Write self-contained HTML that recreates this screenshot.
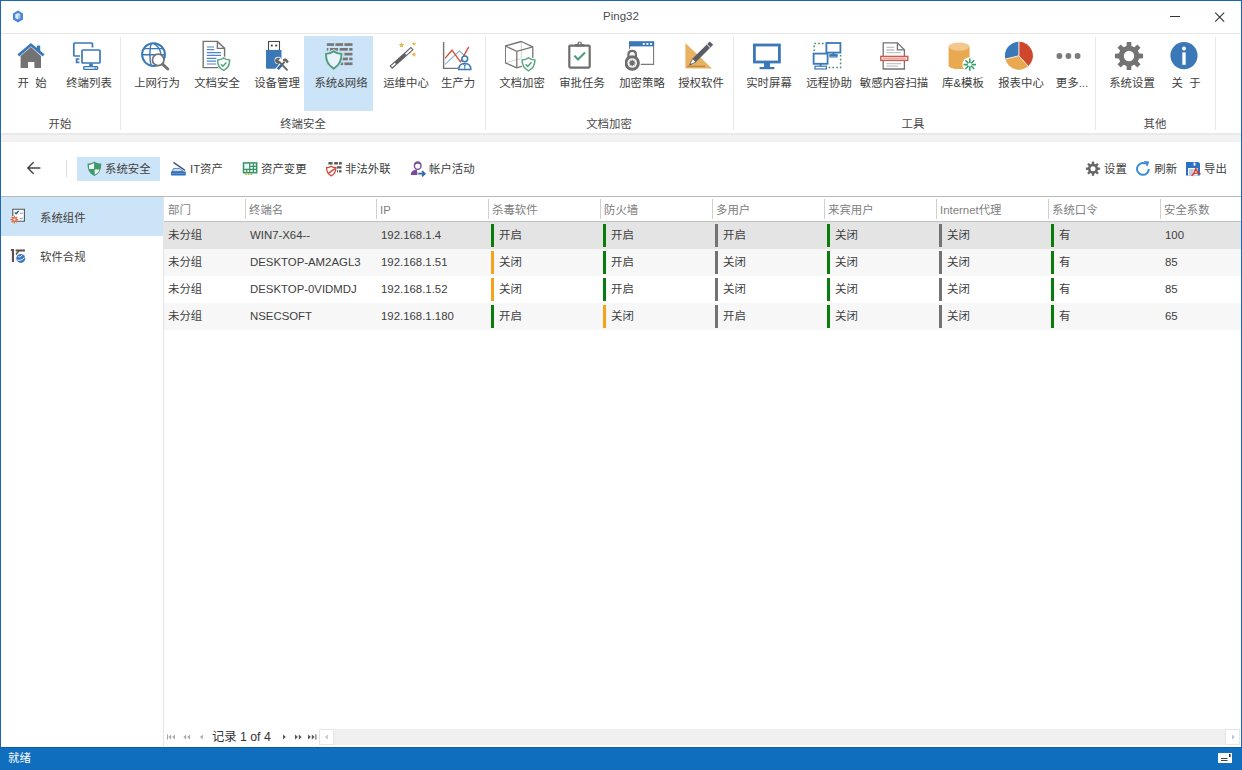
<!DOCTYPE html>
<html lang="zh"><head><meta charset="utf-8"><title>Ping32</title>
<style>
*{box-sizing:border-box;margin:0;padding:0}
html,body{width:1242px;height:770px;overflow:hidden;background:#fff}
body{font-family:"Liberation Sans","Noto Sans CJK SC",sans-serif;font-size:11.4px;color:#404040;position:relative}
.abs{position:absolute}
#win{position:absolute;left:0;top:0;width:1242px;height:770px;background:#fff}
.bd{position:absolute;background:#1c66b4}
#title{position:absolute;left:1px;top:1px;width:1239px;height:33px;border-bottom:1px solid #e6e6e6;background:#fff}
#title .t{position:absolute;left:0;width:1240px;top:7.5px;text-align:center;font-size:11.5px;line-height:15px;color:#4c4c4c}
.rb{position:absolute;top:36px;height:75px;text-align:center;white-space:nowrap}
.rb .lb{position:absolute;left:-19px;right:-21px;top:39.5px;font-size:11.4px;line-height:14px;color:#404040;text-align:center}
.rb>svg{position:absolute;left:50%;margin-left:-16px;top:4px;width:32px;height:32px}
.rsep{position:absolute;top:37px;height:93px;width:1px;background:#e8e8e8}
.gl{position:absolute;top:116.5px;width:100px;margin-left:-50px;text-align:center;font-size:11.4px;line-height:14px;color:#484848}
#band{position:absolute;left:1px;top:133px;width:1240px;height:9px;background:#f2f2f2;border-top:2px solid #e9e9e9}
.tb{position:absolute;top:161px;height:16px;font-size:11.4px;line-height:16px;color:#404040;white-space:nowrap}
.tbi{position:absolute;top:160px;width:16px;height:16px;overflow:visible}
#side{position:absolute;left:1px;top:197px;width:163px;height:549px;background:#fff}
.si{position:absolute;left:0;width:162px;height:39px;font-size:11.4px;line-height:42px;padding-left:39px;color:#404040}
.th{position:absolute;top:203px;font-size:11.4px;line-height:14px;color:#808080;white-space:nowrap}
.hs{position:absolute;top:199px;width:1px;height:20px;background:#d0d0d0}
.row{position:absolute;left:164px;width:1077px;height:27px}
.c{position:absolute;top:6px;font-size:11.4px;line-height:14px;color:#404040;white-space:nowrap}
.bar{position:absolute;top:2px;width:3px;height:23px}
.g{background:#0a7c0a}.o{background:#f5a31a}.k{background:#737373}
#nav{position:absolute;left:164px;top:728px;width:1077px;height:18px;background:#fff}
#status{position:absolute;left:0;top:747px;width:1242px;height:23px;background:#106ebe;border-top:1px solid #0c5ea6;color:#fff;font-size:11.4px;line-height:23px}
</style></head><body>
<div id="win">
<div class="bd" style="left:0;top:0;width:1242px;height:1px"></div><div class="bd" style="left:0;top:0;width:1px;height:770px"></div><div class="bd" style="left:1241px;top:0;width:1px;height:770px"></div>
<div id="title"><div class="t">Ping32</div></div><svg class="abs" style="left:12px;top:10px;width:12px;height:13px" viewBox="0 0 12 13"><path d="M6 0.6 L11 3.4 V9.4 L6 12.4 L1 9.4 V3.4Z" fill="#4a86d8"/><path d="M6 3 L8.6 4.6 L6 6.2 V9.6 L3.2 8 V4.6Z" fill="#dbe9fb"/><path d="M6 6.2 L8.6 4.6 V8 L6 9.6Z" fill="#9cc0f0"/></svg>
<div class="abs" style="left:1170px;top:16px;width:10px;height:1px;background:#333"></div>
<svg class="abs" style="left:1214px;top:11px;width:12px;height:12px" viewBox="0 0 12 12"><path d="M1.2 1.7 L10.2 10.7 M10.2 1.7 L1.2 10.7" stroke="#333" stroke-width="1.1"/></svg>
<div id="ribbon"><div style="position:absolute;left:304px;top:36px;width:69px;height:75px;background:#cce4f7"></div>
<div class="rb" style="left:15px;width:32px"><svg viewBox="0 0 32 32" style="margin-left:-16px"><path d="M5.6 16 L15.9 7 L26 16 V28 H19.4 V22 H13 V28 H5.6Z" fill="#737373"/><path d="M3.4 15.4 L15.9 4.8 L28.6 15.4" fill="none" stroke="#3b78b8" stroke-width="2.7"/><rect x="21.8" y="5.6" width="3.4" height="6" fill="#3b78b8"/></svg><div class="lb">开&nbsp;&nbsp;始</div></div>
<div class="rb" style="left:72px;width:32px"><svg viewBox="0 0 32 32" style="margin-left:-16px"><path d="M8 16 H2.6 Q1.8 16 1.8 15.2 V3.8 Q1.8 3 2.6 3 H19.7 Q20.5 3 20.5 3.8 V7.6" fill="none" stroke="#3b78b8" stroke-width="1.7"/><path d="M7.4 19 H4.6 V22.4 H7.4" fill="none" stroke="#3b78b8" stroke-width="1.7"/><rect x="10" y="10" width="18" height="13" rx="0.8" fill="#fff" stroke="#3b78b8" stroke-width="1.7"/><rect x="17.2" y="23.4" width="3.6" height="3" fill="#3b78b8"/><rect x="11.8" y="26.6" width="13.8" height="2.8" rx="0.6" fill="#fff" stroke="#3b78b8" stroke-width="1.4"/><rect x="22.4" y="27.4" width="1.8" height="1.2" fill="#3b78b8"/></svg><div class="lb">终端列表</div></div>
<div class="rb" style="left:140px;width:32px"><svg viewBox="0 0 32 32" style="margin-left:-16px"><circle cx="13.5" cy="14.6" r="11.4" fill="#fff" stroke="#3b78b8" stroke-width="2"/><path d="M2.4 14.8 H24.6 M4.6 8.6 H22.4 M11.2 3.4 C9.4 9 9.4 20 11.2 25.8 M13.6 3.4 C21 7.6 21.4 15 20.6 17" fill="none" stroke="#3b78b8" stroke-width="1.4"/><circle cx="18.2" cy="19.9" r="5.7" fill="#fff" stroke="#737373" stroke-width="1.7"/><path d="M22.8 24.4 L27.8 29" stroke="#737373" stroke-width="3" stroke-linecap="round"/></svg><div class="lb">上网行为</div></div>
<div class="rb" style="left:200px;width:32px"><svg viewBox="0 0 32 32" style="margin-left:-16px"><path d="M3.2 1.4 H17.4 L24.6 8.4 V27.6 H3.2Z" fill="#fff" stroke="#737373" stroke-width="1.4"/><path d="M17.4 1.4 V8.4 H24.6" fill="none" stroke="#737373" stroke-width="1.4"/><path d="M6.8 7 H14 M6.8 9.6 H14 M6.8 12.6 H21 M6.8 15.4 H21 M6.8 18.4 H16.6 M6.8 21.2 H16 M6.8 24 H16" stroke="#4f86c8" stroke-width="1.2"/><path d="M23.6 18 C25.3 19.4 27.2 19.9 29.6 20 C29.8 25.4 27.6 28.4 23.6 30.4 C19.6 28.4 17.4 25.4 17.6 20 C20 19.9 21.9 19.4 23.6 18Z" fill="#fff" stroke="#fff" stroke-width="3"/><path d="M23.6 18 C25.3 19.4 27.2 19.9 29.6 20 C29.8 25.4 27.6 28.4 23.6 30.4 C19.6 28.4 17.4 25.4 17.6 20 C20 19.9 21.9 19.4 23.6 18Z" fill="#fff" stroke="#58a981" stroke-width="1.5"/><path d="M21 24.2 L22.9 26.2 L26.4 22.4" fill="none" stroke="#5a9a7a" stroke-width="1.5"/></svg><div class="lb">文档安全</div></div>
<div class="rb" style="left:260px;width:32px"><svg viewBox="0 0 32 32" style="margin-left:-16px"><rect x="8.5" y="1.5" width="11" height="9" fill="#fff" stroke="#484848" stroke-width="1.1"/><rect x="10.8" y="4.6" width="1.9" height="1.9" fill="#444"/><rect x="15.3" y="4.6" width="1.9" height="1.9" fill="#444"/><path d="M6 10 H21.5 V27.4 Q21.5 28.8 20 28.8 H7.5 Q6 28.8 6 27.4Z" fill="#3b78b8"/><g stroke="#fff" stroke-width="4.6" stroke-linecap="round"><path d="M18.4 20.8 L27 29.8 M25.6 20.8 L17.6 29.6"/></g><circle cx="18.2" cy="20.4" r="3.6" fill="#fff"/><path d="M24.2 18 L29 22.4 L27 24.6 L22.2 20.2Z" fill="#fff" stroke="#fff" stroke-width="1.6"/><path d="M24.6 21.8 L21.6 25" stroke="#666" stroke-width="1.9"/><path d="M21.8 24.8 L17.8 29.2" stroke="#2f68ad" stroke-width="2.6"/><path d="M23.6 18.8 Q25.6 17.8 27 19.2 L28.8 21.6 L27 23.4 L25.6 21.6 L24 21.4 L22.6 20Z" fill="#666"/><path d="M19.4 21.8 L27 29.8" stroke="#666" stroke-width="1.9" stroke-linecap="round"/><path d="M20.6 19 A3 3 0 1 0 20.4 22.8 L18.6 20.8 L19 19.2Z" fill="#666"/></svg><div class="lb">设备管理</div></div>
<div class="rb" style="left:324px;width:32px"><svg viewBox="0 0 32 32" style="margin-left:-16px"><rect x="2.8" y="3.2" width="7.3" height="2.7" fill="#777"/><rect x="11.4" y="3.2" width="7.7" height="2.7" fill="#777"/><rect x="20.4" y="3.2" width="8.1" height="2.7" fill="#777"/><rect x="2.8" y="8.0" width="1.5" height="2.7" fill="#777"/><rect x="5.9" y="8.0" width="8.1" height="2.7" fill="#777"/><rect x="15.6" y="8.0" width="8.3" height="2.7" fill="#777"/><rect x="25.2" y="8.0" width="3.3" height="2.7" fill="#777"/><rect x="2.8" y="12.8" width="7.3" height="2.7" fill="#777"/><rect x="11.4" y="12.8" width="7.7" height="2.7" fill="#777"/><rect x="20.4" y="12.8" width="8.1" height="2.7" fill="#777"/><rect x="2.8" y="17.6" width="1.5" height="2.7" fill="#777"/><rect x="5.9" y="17.6" width="8.1" height="2.7" fill="#777"/><rect x="15.6" y="17.6" width="8.3" height="2.7" fill="#777"/><rect x="25.2" y="17.6" width="3.3" height="2.7" fill="#777"/><rect x="2.8" y="22.4" width="7.3" height="2.7" fill="#777"/><rect x="11.4" y="22.4" width="7.7" height="2.7" fill="#777"/><rect x="20.4" y="22.4" width="8.1" height="2.7" fill="#777"/><path d="M9.7 11.2 C12 13 14.6 13.8 17.4 13.9 C17.7 21 14.8 25.6 9.7 28.6 C4.6 25.6 1.7 21 2 13.9 C4.8 13.8 7.4 13 9.7 11.2Z" fill="#cce4f7" stroke="#cce4f7" stroke-width="3.6"/><path d="M9.7 11.2 C12 13 14.6 13.8 17.4 13.9 C17.7 21 14.8 25.6 9.7 28.6 C4.6 25.6 1.7 21 2 13.9 C4.8 13.8 7.4 13 9.7 11.2Z" fill="#eaf3fb" stroke="#4f9e7a" stroke-width="1.9"/></svg><div class="lb">系统&amp;网络</div></div>
<div class="rb" style="left:389px;width:32px"><svg viewBox="0 0 32 32" style="margin-left:-16px"><path d="M1.8 27.4 L23.3 8.3" stroke="#606060" stroke-width="4"/><path d="M2.6 26.7 L6.4 23.3" stroke="#fff" stroke-width="1.8"/><path d="M16.6 14.3 L22.5 9" stroke="#fff" stroke-width="1.8"/><path d="M12.50 2.00 L13.32 3.97 L15.45 4.14 L13.83 5.53 L14.32 7.61 L12.50 6.49 L10.68 7.61 L11.17 5.53 L9.55 4.14 L11.68 3.97Z" fill="#e9b85a"/><path d="M25.00 1.40 L25.63 2.93 L27.28 3.06 L26.03 4.13 L26.41 5.74 L25.00 4.88 L23.59 5.74 L23.97 4.13 L22.72 3.06 L24.37 2.93Z" fill="#e9b85a"/><path d="M25.00 11.80 L25.71 13.52 L27.57 13.67 L26.16 14.88 L26.59 16.68 L25.00 15.71 L23.41 16.68 L23.84 14.88 L22.43 13.67 L24.29 13.52Z" fill="#e9b85a"/></svg><div class="lb">运维中心</div></div>
<div class="rb" style="left:441px;width:32px"><svg viewBox="0 0 32 32" style="margin-left:-16px"><path d="M2.6 2 V28.4 H17" fill="none" stroke="#737373" stroke-width="1.4"/><path d="M4 24.4 L18.6 10.8 L23.2 15.4" fill="none" stroke="#8db3da" stroke-width="1.2"/><path d="M4 18.4 L11 10.2 L19.4 21.8 L27.8 6.8" fill="none" stroke="#d2503a" stroke-width="1.4"/><circle cx="23.8" cy="18.8" r="2.9" fill="#fff" stroke="#3b78b8" stroke-width="1.5"/><path d="M17.8 29.6 C17.8 25.6 20 23.6 23.8 23.6 C27.6 23.6 29.8 25.6 29.8 29.6Z" fill="#fff" stroke="#3b78b8" stroke-width="1.5"/><path d="M22.4 23.8 L23.8 26 L25.2 23.8 M23.8 26 V29.4" fill="none" stroke="#3b78b8" stroke-width="1"/></svg><div class="lb">生产力</div></div>
<div class="rb" style="left:505px;width:32px"><svg viewBox="0 0 32 32" style="margin-left:-16px"><path d="M16.3 1.5 V18.4 L0.3 22.8 M16.3 18.4 L27.8 22.8" fill="none" stroke="#d2d2d2" stroke-width="1"/><path d="M0.3 6 L16.3 1.5 L27.8 6.9 V22.8 L11.8 27.8 L0.3 22.8Z" fill="none" stroke="#777" stroke-width="1.3" stroke-linejoin="round"/><path d="M0.3 6 L11.8 11.3 L27.8 6.9 M11.8 11.3 V27.8" fill="none" stroke="#777" stroke-width="1.3"/><path d="M23.5 17.8 C25.3 19.2 27.3 19.8 29.9 19.9 C30.1 25.4 27.8 28.6 23.5 30.8 C19.2 28.6 16.9 25.4 17.1 19.9 C19.7 19.8 21.7 19.2 23.5 17.8Z" fill="#fff" stroke="#fff" stroke-width="3.2"/><path d="M23.5 17.8 C25.3 19.2 27.3 19.8 29.9 19.9 C30.1 25.4 27.8 28.6 23.5 30.8 C19.2 28.6 16.9 25.4 17.1 19.9 C19.7 19.8 21.7 19.2 23.5 17.8Z" fill="#fff" stroke="#58a981" stroke-width="1.5"/><path d="M20.6 24.2 L22.7 26.4 L26.6 22.2" fill="none" stroke="#5a9a7a" stroke-width="1.5"/></svg><div class="lb">文档加密</div></div>
<div class="rb" style="left:565px;width:32px"><svg viewBox="0 0 32 32" style="margin-left:-16px"><rect x="4.3" y="5.6" width="20.4" height="22" rx="1" fill="#fff" stroke="#6e6e6e" stroke-width="2.2"/><path d="M10 6.4 V4 H12.4 C12.4 0.8 17 0.8 17 4 H19.4 V6.4Z" fill="#6e6e6e"/><circle cx="14.7" cy="3.4" r="0.9" fill="#fff"/><path d="M9.4 15.6 L13 19.4 L20 12.4" fill="none" stroke="#4a9d78" stroke-width="2.1"/></svg><div class="lb">审批任务</div></div>
<div class="rb" style="left:625px;width:32px"><svg viewBox="0 0 32 32" style="margin-left:-16px"><path d="M4.6 6 V24.4 H28.6 V6" fill="#fff" stroke="#7a7a7a" stroke-width="1.1"/><rect x="4" y="1.2" width="25.2" height="5.2" fill="#3b78b8"/><rect x="17.8" y="3" width="2" height="1.8" fill="#fff"/><rect x="21.4" y="3" width="2" height="1.8" fill="#fff"/><rect x="25" y="3" width="2" height="1.8" fill="#fff"/><path d="M3.4 18 V14.4 C3.4 9.6 11 9.6 11 14.4 V18" fill="none" stroke="#fff" stroke-width="4.6"/><circle cx="7.2" cy="23" r="8.8" fill="#fff"/><path d="M3.4 18 V14.4 C3.4 9.6 11 9.6 11 14.4 V18" fill="none" stroke="#6e6e6e" stroke-width="2.2"/><circle cx="7.2" cy="23" r="7.7" fill="#6e6e6e"/><circle cx="7.2" cy="23" r="4.8" fill="#f4f4f4"/><path d="M6.66 20.76 L6.68 19.74 L7.72 19.74 L7.74 20.76 L8.40 21.04 L9.14 20.33 L9.87 21.06 L9.16 21.80 L9.44 22.46 L10.46 22.48 L10.46 23.52 L9.44 23.54 L9.16 24.20 L9.87 24.94 L9.14 25.67 L8.40 24.96 L7.74 25.24 L7.72 26.26 L6.68 26.26 L6.66 25.24 L6.00 24.96 L5.26 25.67 L4.53 24.94 L5.24 24.20 L4.96 23.54 L3.94 23.52 L3.94 22.48 L4.96 22.46 L5.24 21.80 L4.53 21.06 L5.26 20.33 L6.00 21.04Z" fill="#6e6e6e"/><circle cx="7.2" cy="23" r="0.01" fill="#fff"/></svg><div class="lb">加密策略</div></div>
<div class="rb" style="left:684px;width:32px"><svg viewBox="0 0 32 32" style="margin-left:-16px"><path d="M1.4 3 V28.4 H28Z" fill="#e9b262"/><path d="M3.4 26.4 H21" stroke="#9a7226" stroke-width="1.3" stroke-dasharray="1.3 0.7"/><path d="M25.8 1.4 L29.2 4.8 L12 22 L8.6 18.6Z" fill="#5c5c66"/><path d="M8.6 18.6 L12 22 L5.6 25Z" fill="#fff" stroke="#5c5c66" stroke-width="0.8"/><path d="M6.6 23.2 L7.6 24.2 L5.6 25Z" fill="#444"/><path d="M22.9 4.3 L26.3 7.7" stroke="#fff" stroke-width="1"/></svg><div class="lb">授权软件</div></div>
<div class="rb" style="left:752px;width:32px"><svg viewBox="0 0 32 32" style="margin-left:-17px"><rect x="3.4" y="5" width="25" height="17" fill="#fff" stroke="#3b78b8" stroke-width="2.8"/><rect x="13" y="23" width="6" height="4.4" fill="#3b78b8"/><rect x="8.6" y="27" width="14.8" height="2.2" fill="#3b78b8"/></svg><div class="lb">实时屏幕</div></div>
<div class="rb" style="left:812px;width:32px"><svg viewBox="0 0 32 32" style="margin-left:-17.5px"><path d="M3.2 11 V3.6 H14 M29.6 15 V27.4 H17.6" fill="none" stroke="#3f8f6f" stroke-width="1.5" stroke-dasharray="1.6 2.2"/><rect x="15.4" y="3" width="14" height="9.6" fill="#fff" stroke="#3b78b8" stroke-width="1.8"/><path d="M22.4 12.6 V15.4 M18.4 15.6 H26.6" stroke="#3b78b8" stroke-width="1.8"/><rect x="19" y="14.4" width="7" height="2.6" fill="none" stroke="#3b78b8" stroke-width="1"/><rect x="2.6" y="13.6" width="14" height="10.2" fill="#fff" stroke="#3b78b8" stroke-width="1.8"/><path d="M9.6 23.8 V26.4" stroke="#3b78b8" stroke-width="1.8"/><rect x="4" y="26.2" width="11.4" height="2.8" fill="none" stroke="#3b78b8" stroke-width="1.2"/></svg><div class="lb">远程协助</div></div>
<div class="rb" style="left:877px;width:32px"><svg viewBox="0 0 32 32" style="margin-left:-15.5px"><path d="M5.2 2.8 H19.4 L26.4 9.8 V29 H5.2Z" fill="#fff" stroke="#737373" stroke-width="1.3"/><path d="M19.4 2.8 V9.8 H26.4" fill="none" stroke="#737373" stroke-width="1.3"/><path d="M8.4 7.4 H16.4 M8.4 10 H16.4 M8.4 12.6 H23 M8.4 23.6 H23 M8.4 26.2 H20" stroke="#c4c4c4" stroke-width="1.3"/><rect x="2.8" y="16.4" width="27" height="4" fill="#fbeeee" stroke="#d4584a" stroke-width="1.4"/><path d="M5 18.4 H27.6" stroke="#e9a79f" stroke-width="1.4"/></svg><div class="lb">敏感内容扫描</div></div>
<div class="rb" style="left:946px;width:32px"><svg viewBox="0 0 32 32" style="margin-left:-15px"><path d="M1.6 6.6 V25.4 C1.6 30.2 22.6 30.2 22.6 25.4 V6.6Z" fill="#e8a951"/><ellipse cx="12.1" cy="6.6" rx="10.5" ry="4.2" fill="#f2c88c"/><circle cx="22.8" cy="24.6" r="7.4" fill="#fff"/><g stroke="#35a069" stroke-width="1.6"><path d="M22.8 18.4 V30.8 M16.6 24.6 H29 M18.4 20.2 L27.2 29 M27.2 20.2 L18.4 29"/></g><circle cx="22.8" cy="24.6" r="1.9" fill="#fff"/></svg><div class="lb">库&amp;模板</div></div>
<div class="rb" style="left:1004px;width:32px"><svg viewBox="0 0 32 32" style="margin-left:-17px"><path d="M15.9 15.75 L15.90 1.75 A14 14 0 0 1 25.18 26.24Z" fill="#d0462c"/><path d="M15.9 15.75 L25.18 26.24 A14 14 0 0 1 2.30 19.07Z" fill="#e8a951"/><path d="M15.9 15.75 L2.30 19.07 A14 14 0 0 1 15.90 1.75Z" fill="#3b78b8"/><path d="M15.90 1.75 L15.9 15.75 L25.18 26.24 M15.9 15.75 L2.30 19.07" stroke="#f4ece4" stroke-width="1" fill="none"/></svg><div class="lb">报表中心</div></div>
<div class="rb" style="left:1055px;width:32px"><svg viewBox="0 0 32 32" style="margin-left:-18.7px"><circle cx="7.4" cy="16" r="2.9" fill="#7a7a7a"/><circle cx="16.4" cy="16" r="2.9" fill="#7a7a7a"/><circle cx="25.6" cy="16" r="2.9" fill="#7a7a7a"/></svg><div class="lb">更多...</div></div>
<div class="rb" style="left:1115px;width:32px"><svg viewBox="0 0 32 32" style="margin-left:-18px"><path d="M13.57 5.89 L13.78 1.97 L18.22 1.97 L18.43 5.89 L21.43 7.13 L24.35 4.51 L27.49 7.65 L24.87 10.57 L26.11 13.57 L30.03 13.78 L30.03 18.22 L26.11 18.43 L24.87 21.43 L27.49 24.35 L24.35 27.49 L21.43 24.87 L18.43 26.11 L18.22 30.03 L13.78 30.03 L13.57 26.11 L10.57 24.87 L7.65 27.49 L4.51 24.35 L7.13 21.43 L5.89 18.43 L1.97 18.22 L1.97 13.78 L5.89 13.57 L7.13 10.57 L4.51 7.65 L7.65 4.51 L10.57 7.13Z" fill="#737373"/><circle cx="16" cy="16" r="5.2" fill="#fff"/></svg><div class="lb">系统设置</div></div>
<div class="rb" style="left:1169px;width:32px"><svg viewBox="0 0 32 32" style="margin-left:-17.2px"><circle cx="16" cy="15.6" r="13.6" fill="#3b78b8"/><circle cx="16" cy="8.6" r="2" fill="#fff"/><rect x="14.3" y="12.4" width="3.4" height="12.4" fill="#fff"/></svg><div class="lb">关&nbsp;&nbsp;于</div></div>
<div class="rsep" style="left:120px"></div><div class="rsep" style="left:485px"></div><div class="rsep" style="left:733px"></div><div class="rsep" style="left:1095px"></div><div class="rsep" style="left:1215px"></div><div class="gl" style="left:60px">开始</div><div class="gl" style="left:303px">终端安全</div><div class="gl" style="left:609px">文档加密</div><div class="gl" style="left:913px">工具</div><div class="gl" style="left:1155px">其他</div></div>
<div id="band"></div>
<div id="toolbar"><svg class="abs" style="left:26px;top:160px;width:16px;height:16px" viewBox="0 0 16 16"><path d="M14.4 8 H2 M7.6 2.2 L1.8 8 L7.6 13.8" fill="none" stroke="#444" stroke-width="1.4"/></svg><div class="abs" style="left:66px;top:160px;width:1px;height:17px;background:#e0e0e0"></div><div class="abs" style="left:77px;top:157px;width:83px;height:24px;background:#cce4f7"></div><svg class="tbi" style="left:86px" viewBox="0 0 16 16"><g transform="translate(0.4,0.7)"><path d="M8 0.8 C10 2.2 12.2 2.8 14.8 2.8 C15.1 9 12.8 13 8 15.4 C3.2 13 0.9 9 1.2 2.8 C3.8 2.8 6 2.2 8 0.8Z" fill="#3f9a6e"/><path d="M7.7 2.4 V8.2 H2.8 C2.6 6.8 2.5 5.4 2.6 4.2 C4.5 4.1 6.1 3.5 7.7 2.4Z M8.3 8.8 H13.2 C12.6 11 11 12.6 8.3 14Z" fill="#f2fbf6"/></g></svg><div class="tb" style="left:105px">系统安全</div>
<svg class="tbi" style="left:170px" viewBox="0 0 16 16"><path d="M2.1 11.6 L3.6 8.4 H9.6 L13.4 11.6Z" fill="#c4dcf2" stroke="#4a78b0" stroke-width="0.9"/><rect x="1" y="11.5" width="14.8" height="3.9" rx="0.6" fill="#2f70bc"/><path d="M2 13.4 H14.8" stroke="#6fa0d8" stroke-width="0.8"/><path d="M3.4 2.4 L15 10.4" stroke="#4a5a70" stroke-width="1.5"/></svg><div class="tb" style="left:190px">IT资产</div>
<svg class="tbi" style="left:242px" viewBox="0 0 16 16"><rect x="1.5" y="2.9" width="13.2" height="9.8" fill="#e4faf0" stroke="#3a9268" stroke-width="1.5"/><path d="M7.7 2.9 V12.7 M11.4 2.9 V12.7 M7.7 6.3 H14.7 M1.5 9.4 H14.7 M4.7 9.4 V12.7" stroke="#3a9268" stroke-width="1.2" fill="none"/><path d="M3 14.2 H4.6 M5.8 14.2 H7.4 M8.6 14.2 H10.2" stroke="#b9aa4c" stroke-width="1.4"/></svg><div class="tb" style="left:261px">资产变更</div>
<svg class="tbi" style="left:326px" viewBox="0 0 16 16"><g fill="#555"><rect x="2.4" y="2.1" width="4.2" height="2.4"/><rect x="8.2" y="2.1" width="3.7" height="2.4"/><rect x="13" y="2.1" width="2.8" height="2.4"/><rect x="10.8" y="6.3" width="4.7" height="2.2"/><rect x="11" y="10.2" width="1" height="2.2"/><rect x="13" y="10.2" width="2.5" height="2.2"/></g><path d="M5.2 6.2 C6.6 7.2 8 7.6 9.8 7.6 C10 11.8 8.4 14.2 5.2 15.8 C2 14.2 0.4 11.8 0.6 7.6 C2.4 7.6 3.8 7.2 5.2 6.2Z" fill="#fff" stroke="#cf4a3c" stroke-width="1.3"/><path d="M2.4 13.4 L8.8 8.6" stroke="#cf4a3c" stroke-width="1.4"/></svg><div class="tb" style="left:345px">非法外联</div>
<svg class="tbi" style="left:410px" viewBox="0 0 16 16"><ellipse cx="7.7" cy="5.7" rx="3.3" ry="3.7" fill="#fff" stroke="#7a4a9c" stroke-width="1.4"/><path d="M4.6 4.4 C5.6 2.6 9.8 2.6 10.8 4.4" fill="none" stroke="#7a4a9c" stroke-width="1.6"/><path d="M0.8 15 C0.8 12 2.4 10.6 5 10 L6.4 9 L7.4 12.6 V15Z" fill="#7a4a9c"/><path d="M8.2 13.7 H14.4 M12 11.1 L14.8 13.7 L12 16.3" fill="none" stroke="#2c6aa8" stroke-width="1.7"/></svg><div class="tb" style="left:429px">帐户活动</div>
<svg class="tbi" style="left:1085px" viewBox="0 0 16 16"><path d="M6.81 3.74 L6.87 1.59 L9.13 1.59 L9.19 3.74 L10.66 4.35 L12.23 2.88 L13.82 4.47 L12.35 6.04 L12.96 7.51 L15.11 7.57 L15.11 9.83 L12.96 9.89 L12.35 11.36 L13.82 12.93 L12.23 14.52 L10.66 13.05 L9.19 13.66 L9.13 15.81 L6.87 15.81 L6.81 13.66 L5.34 13.05 L3.77 14.52 L2.18 12.93 L3.65 11.36 L3.04 9.89 L0.89 9.83 L0.89 7.57 L3.04 7.51 L3.65 6.04 L2.18 4.47 L3.77 2.88 L5.34 4.35Z" fill="#666"/><circle cx="8" cy="8.7" r="2.5" fill="#fff"/></svg><div class="tb" style="left:1104px">设置</div>
<svg class="tbi" style="left:1135px" viewBox="0 0 16 16"><path d="M13.8 9 A5.9 5.9 0 1 1 10.4 3.6" fill="none" stroke="#3a8bd6" stroke-width="2"/><path d="M8.8 1 L14.4 1.6 L12.2 6.8Z" fill="#3a8bd6"/></svg><div class="tb" style="left:1154.3px">刷新</div>
<svg class="tbi" style="left:1185px" viewBox="0 0 16 16"><path d="M1 2 H13.4 L15 3.6 V15.4 H1Z" fill="#2b72c4"/><rect x="8.6" y="2.6" width="1.8" height="3" fill="#fff"/><rect x="3" y="8" width="9.6" height="7.4" fill="#fff"/><path d="M4 10 H9 M4 12 H8.4 M4 14 H7.6" stroke="#7f9fc8" stroke-width="1"/><path d="M10.8 7.8 C10.4 10.6 9 13.6 6.6 16 M10.8 7.8 C11.4 11 13 13.4 15.6 14 M7.4 14.6 C10 13.2 12.6 12.8 15.4 13.6" stroke="#e0392b" stroke-width="1.3" fill="none"/></svg><div class="tb" style="left:1204px">导出</div>
<div class="abs" style="left:1px;top:196px;width:1240px;height:1px;background:#b8b8b8"></div></div>
<div id="side"><div class="si" style="top:0;background:#cce4f7">系统组件</div><div class="si" style="top:39px">软件合规</div><svg class="abs" style="left:8px;top:10px;width:17px;height:17px" viewBox="0 0 17 17"><path d="M3.8 9 V2.2 H15.4 V14.2 H8" fill="#fff" stroke="#4c545c" stroke-width="1.1"/><path d="M5.8 5.4 L7.2 6.8 L9.6 4" fill="none" stroke="#2c5f96" stroke-width="1.4"/><path d="M10.8 6.2 H13.8 M10.8 11.4 H13.8" stroke="#8a8a8a" stroke-width="0.9"/><path d="M4.77 9.97 L4.79 8.75 L6.01 8.75 L6.03 9.97 L6.81 10.30 L7.69 9.44 L8.56 10.31 L7.70 11.19 L8.03 11.97 L9.25 11.99 L9.25 13.21 L8.03 13.23 L7.70 14.01 L8.56 14.89 L7.69 15.76 L6.81 14.90 L6.03 15.23 L6.01 16.45 L4.79 16.45 L4.77 15.23 L3.99 14.90 L3.11 15.76 L2.24 14.89 L3.10 14.01 L2.77 13.23 L1.55 13.21 L1.55 11.99 L2.77 11.97 L3.10 11.19 L2.24 10.31 L3.11 9.44 L3.99 10.30Z" fill="#e4704a"/><circle cx="5.4" cy="12.6" r="1.1" fill="#fff"/></svg><svg class="abs" style="left:8px;top:50px;width:18px;height:17px" viewBox="0 0 18 17"><path d="M1.9 2 H5 V15 H2.9 V4 H1.9Z" fill="#5c5048"/><path d="M6.6 2.5 H15.9 V4.6 H10.6 C9.4 5.6 8.4 6.6 7.8 8 L6.4 7 C7 5.8 7.8 5 8.8 4.6 H6.6Z" fill="#5c5048"/><circle cx="11.8" cy="11.4" r="4.5" fill="#3b78c4"/><path d="M9.2 9.6 C10.6 10.4 12 9.4 13.2 7.8 M8.2 13 C10.6 14 13.4 13 15.6 10.4" stroke="#fff" stroke-width="0.9" fill="none"/></svg></div>
<div id="grid"><div class="abs" style="left:164px;top:221px;width:1077px;height:1px;background:#c0c0c0"></div><div class="th" style="left:168px">部门</div><div class="th" style="left:249px">终端名</div><div class="hs" style="left:245px"></div><div class="th" style="left:380px">IP</div><div class="hs" style="left:376px"></div><div class="th" style="left:492px">杀毒软件</div><div class="hs" style="left:488px"></div><div class="th" style="left:604px">防火墙</div><div class="hs" style="left:600px"></div><div class="th" style="left:716px">多用户</div><div class="hs" style="left:712px"></div><div class="th" style="left:828px">来宾用户</div><div class="hs" style="left:824px"></div><div class="th" style="left:940px">Internet代理</div><div class="hs" style="left:936px"></div><div class="th" style="left:1052px">系统口令</div><div class="hs" style="left:1048px"></div><div class="th" style="left:1164px">安全系数</div><div class="hs" style="left:1160px"></div><div class="row" style="top:222px;background:#e4e4e4"><div class="c" style="left:4px">未分组</div><div class="c" style="left:86px">WIN7-X64--</div><div class="c" style="left:217px">192.168.1.4</div><div class="bar g" style="left:327px"></div><div class="c" style="left:335px">开启</div><div class="bar g" style="left:439px"></div><div class="c" style="left:447px">开启</div><div class="bar k" style="left:551px"></div><div class="c" style="left:559px">开启</div><div class="bar g" style="left:663px"></div><div class="c" style="left:671px">关闭</div><div class="bar k" style="left:775px"></div><div class="c" style="left:783px">关闭</div><div class="bar g" style="left:887px"></div><div class="c" style="left:895px">有</div><div class="c" style="left:1001px">100</div></div>
<div class="row" style="top:249px;background:#f7f7f7"><div class="c" style="left:4px">未分组</div><div class="c" style="left:86px">DESKTOP-AM2AGL3</div><div class="c" style="left:217px">192.168.1.51</div><div class="bar o" style="left:327px"></div><div class="c" style="left:335px">关闭</div><div class="bar g" style="left:439px"></div><div class="c" style="left:447px">开启</div><div class="bar k" style="left:551px"></div><div class="c" style="left:559px">关闭</div><div class="bar g" style="left:663px"></div><div class="c" style="left:671px">关闭</div><div class="bar k" style="left:775px"></div><div class="c" style="left:783px">关闭</div><div class="bar g" style="left:887px"></div><div class="c" style="left:895px">有</div><div class="c" style="left:1001px">85</div></div>
<div class="row" style="top:276px;background:#fff"><div class="c" style="left:4px">未分组</div><div class="c" style="left:86px">DESKTOP-0VIDMDJ</div><div class="c" style="left:217px">192.168.1.52</div><div class="bar o" style="left:327px"></div><div class="c" style="left:335px">关闭</div><div class="bar g" style="left:439px"></div><div class="c" style="left:447px">开启</div><div class="bar k" style="left:551px"></div><div class="c" style="left:559px">关闭</div><div class="bar g" style="left:663px"></div><div class="c" style="left:671px">关闭</div><div class="bar k" style="left:775px"></div><div class="c" style="left:783px">关闭</div><div class="bar g" style="left:887px"></div><div class="c" style="left:895px">有</div><div class="c" style="left:1001px">85</div></div>
<div class="row" style="top:303px;background:#f7f7f7"><div class="c" style="left:4px">未分组</div><div class="c" style="left:86px">NSECSOFT</div><div class="c" style="left:217px">192.168.1.180</div><div class="bar g" style="left:327px"></div><div class="c" style="left:335px">开启</div><div class="bar o" style="left:439px"></div><div class="c" style="left:447px">关闭</div><div class="bar k" style="left:551px"></div><div class="c" style="left:559px">开启</div><div class="bar g" style="left:663px"></div><div class="c" style="left:671px">关闭</div><div class="bar k" style="left:775px"></div><div class="c" style="left:783px">关闭</div><div class="bar g" style="left:887px"></div><div class="c" style="left:895px">有</div><div class="c" style="left:1001px">65</div></div>
<div class="abs" style="left:163px;top:197px;width:1px;height:549px;background:#e4e4e4"></div></div>
<div id="nav"><div class="abs" style="left:169px;top:1px;width:892px;height:16px;background:#f0f0f0"></div><svg class="abs" style="left:0;top:0;width:1077px;height:18px" viewBox="0 0 1077 18"><rect x="3" y="6.4" width="1" height="5.2" fill="#a8a8a8"/><path d="M7.2 6.4 L4.4 9 L7.2 11.6Z" fill="#a8a8a8"/><path d="M11.0 6.4 L8.2 9 L11.0 11.6Z" fill="#a8a8a8"/><path d="M22.2 6.4 L19.4 9 L22.2 11.6Z" fill="#a8a8a8"/><path d="M26.0 6.4 L23.2 9 L26.0 11.6Z" fill="#a8a8a8"/><path d="M38.8 6.4 L36 9 L38.8 11.6Z" fill="#a8a8a8"/><path d="M119 6.4 L121.8 9 L119 11.6Z" fill="#555"/><path d="M131 6.4 L133.8 9 L131 11.6Z" fill="#555"/><path d="M134.8 6.4 L137.60000000000002 9 L134.8 11.6Z" fill="#555"/><path d="M144 6.4 L146.8 9 L144 11.6Z" fill="#555"/><path d="M147.8 6.4 L150.60000000000002 9 L147.8 11.6Z" fill="#555"/><rect x="151.4" y="6.4" width="1" height="5.2" fill="#555"/><rect x="155.5" y="1.5" width="14" height="15" fill="#fff" stroke="#e6e6e6"/><path d="M163.8 6.4 L161 9 L163.8 11.6Z" fill="#c4c4c4"/><rect x="1061.5" y="1.5" width="14" height="15" fill="#fff" stroke="#e6e6e6"/><path d="M1068 6.4 L1070.8 9 L1068 11.6Z" fill="#b4c4dc"/></svg><div class="abs" style="left:48px;top:1px;font-size:12.3px;line-height:16px;color:#333;white-space:nowrap">记录 1 of 4</div></div>
<div id="status"><span style="position:absolute;left:8px;top:-1px">就绪</span><svg class="abs" style="left:1218px;top:5px;width:14px;height:10px" viewBox="0 0 14 10"><rect x="0" y="0" width="14" height="10" fill="#fff"/><rect x="11" y="1" width="1.6" height="3" fill="#333"/><path d="M3 5.5 H9.6 M3 7.5 H9.6" stroke="#444" stroke-width="1"/></svg></div>
</div>
</body></html>
